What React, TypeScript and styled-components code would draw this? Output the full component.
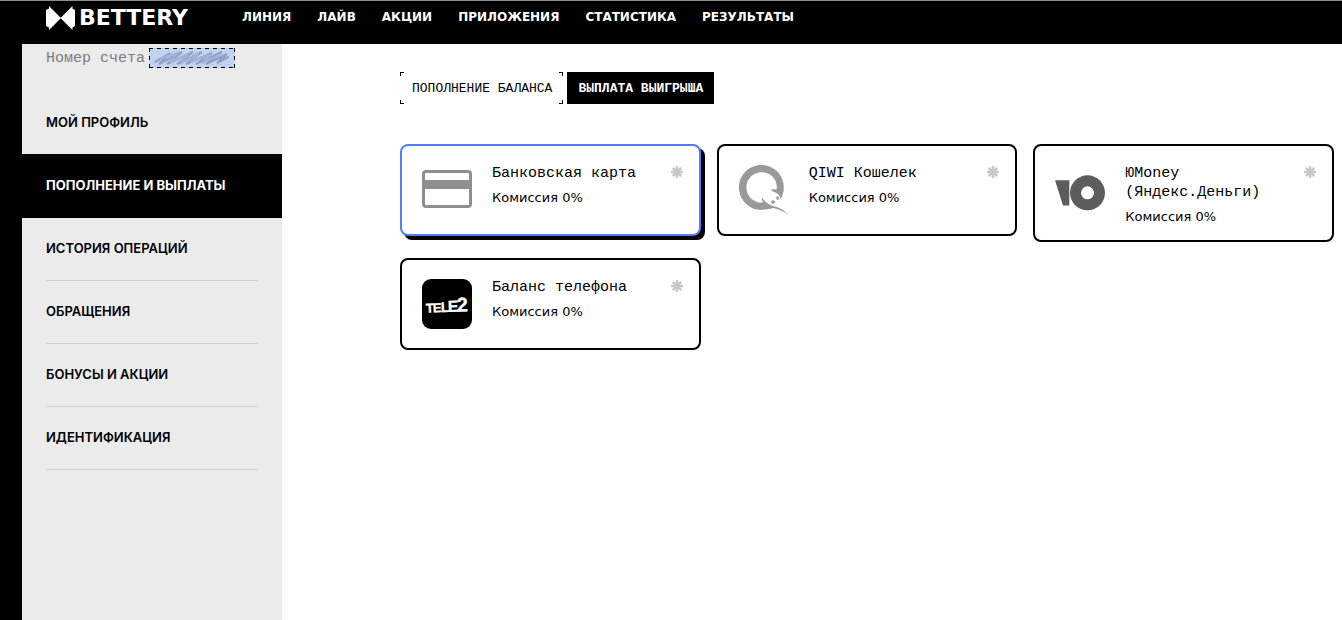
import React, { useState } from 'react';
import styled, { createGlobalStyle, css } from 'styled-components';

const mono = `'Liberation Mono', monospace`;
const sans = `Inter, 'Open Sans', sans-serif`;
const wide = `'DejaVu Sans', Verdana, sans-serif`;

const GlobalStyle = createGlobalStyle`
  *, *::before, *::after { box-sizing: border-box; }
  body {
    margin: 0;
    background: #fff;
    color: #000;
    font-family: ${sans};
  }
  button { font: inherit; color: inherit; cursor: pointer; }
  a { color: inherit; text-decoration: none; }
`;

const Page = styled.div`
  min-height: 100vh;
  display: flex;
  flex-direction: column;
`;

const Header = styled.header`
  display: flex;
  align-items: flex-start;
  gap: 54px;
  height: 44px;
  padding: 4px 24px 0 46px;
  border-top: 1px solid #8c8c8c;
  background: #000;
  color: #fff;
`;

const Logo = styled.a`
  display: flex;
  align-items: center;
  gap: 4px;
  height: 26px;
  font: bold 22px/26px ${wide};
`;

const Nav = styled.nav`
  display: flex;
  gap: 26px;
`;

const NavLink = styled.a`
  font: bold 12px/24px ${wide};
  white-space: nowrap;
`;

const Body = styled.div`
  flex: 1;
  display: flex;
  border-left: 22px solid #000;
`;

const Sidebar = styled.aside`
  flex: 0 0 260px;
  background: #ebebeb;
`;

const Account = styled.div`
  display: flex;
  align-items: flex-start;
  gap: 4px;
  padding: 4px 24px 22px;
  font: 15px/22px ${mono};
  color: #7d7d7d;
`;

const dashX = 'linear-gradient(90deg, #000 4px, transparent 4px)';
const dashY = 'linear-gradient(#000 4px, transparent 4px)';

const HiddenNumber = styled.span`
  display: flex;
  width: 86px;
  height: 20px;
  padding: 1px;
  background: ${dashX} left top / 8px 1px repeat-x, ${dashX} left bottom / 8px 1px repeat-x,
    ${dashY} left top / 1px 8px repeat-y, ${dashY} right top / 1px 8px repeat-y, #c1d3f3;
`;

const Menu = styled.ul`
  list-style: none;
  margin: 0;
  padding: 0;
`;

const MenuItem = styled.li<{ $active?: boolean }>`
  padding: 0 24px;
  ${({ $active }) =>
    $active &&
    css`
      margin-top: -1px;
      padding-top: 1px;
      background: #000;
      color: #fff;
    `}
`;

const MenuLink = styled.a<{ $active?: boolean }>`
  display: block;
  padding-bottom: 2px;
  border-bottom: 1px solid ${({ $active }) => ($active ? '#000' : '#d0d0d0')};
  font-size: 13px;
  font-weight: ${({ $active }) => ($active ? 700 : 600)};
  line-height: 60px;
  white-space: nowrap;
`;

const Main = styled.main`
  flex: 1;
  min-width: 0;
  padding: 28px 8px 28px 118px;
`;

const Tabs = styled.div`
  display: flex;
  gap: 4px;
  margin-bottom: 40px;
`;

const corner = (x: string, y: string) =>
  `linear-gradient(#000, #000) ${x} ${y} / 4px 1px no-repeat, linear-gradient(#000, #000) ${x} ${y} / 1px 4px no-repeat`;

const Tab = styled.button<{ $active?: boolean }>`
  height: 32px;
  padding: 2px 11px 0 12px;
  border: 0;
  font: 13px/30px ${mono};
  ${({ $active }) =>
    $active
      ? css`
          padding-left: 11px;
          background: #000;
          color: #fff;
          font-weight: 700;
        `
      : css`
          background: ${corner('left', 'top')}, ${corner('right', 'top')},
            ${corner('left', 'bottom')}, ${corner('right', 'bottom')};
        `}
`;

const Cards = styled.div`
  display: grid;
  grid-template-columns: repeat(3, minmax(0, 1fr));
  align-items: start;
  gap: 16px;
`;

const Card = styled.button<{ $selected?: boolean }>`
  display: flex;
  align-items: flex-start;
  gap: 20px;
  min-height: 92px;
  padding: 0 16px 0 20px;
  border: 2px solid ${({ $selected }) => ($selected ? '#527bff' : '#000')};
  border-radius: 8px;
  background: #fff;
  box-shadow: ${({ $selected }) => ($selected ? '4px 4px 0 #000' : 'none')};
  text-align: left;
`;

const CardIcon = styled.svg`
  flex: none;
  align-self: center;
  width: 50px;
  height: 50px;
  overflow: visible;
`;

const CardText = styled.span`
  flex: 1;
  display: flex;
  flex-direction: column;
  gap: 5px;
  padding: 18px 0 14px;
`;

const CardTitle = styled.span`
  font: 15px/19px ${mono};
`;

const Fee = styled.span`
  font: 13px/19px ${wide};
`;

const StarIcon = styled.svg`
  flex: none;
  width: 12px;
  height: 12px;
  margin-top: 20px;
`;

const Star = () => (
  <StarIcon viewBox="0 0 12 12" stroke="#c8c8c8" strokeWidth="2.5" aria-hidden="true">
    <path d="M6 0v12M0 6h12M1.8 1.8l8.4 8.4M10.2 1.8l-8.4 8.4" />
  </StarIcon>
);

const BankCardIcon = () => (
  <CardIcon viewBox="0 0 50 50" aria-hidden="true">
    <rect x="1.5" y="6.5" width="47" height="35" rx="2.5" fill="none" stroke="#8f8f8f" strokeWidth="3" />
    <path d="M2 15h46v9H2z" fill="#8f8f8f" />
  </CardIcon>
);

const QiwiIcon = () => (
  <CardIcon viewBox="0 0 50 50" fill="#999" aria-hidden="true">
    <path
      fillRule="evenodd"
      d="M22.4 0C34.8 0 44.8 10 44.8 22.4c0 4.200-1.200 8.200-3.200 11.600-.8-3.600-3.200-6.400-7.200-7.200-1-.6-1.800-1.200-2.600-2.200 1.900-.4 3.700-.4 5.600.2.300-1.200.4-2 .4-3.200C37.800 13.600 31 7.200 22.600 7.200 14 7.200 7.400 14 7.400 22.400S14 37.600 22.600 37.600c.6 0 1.200-.1 1.800-.2-1.400-1.400-1.800-3-1.400-5 3 4.600 7.200 7.800 12.800 9.200 5.200 1.200 9.800 3.800 12.900 8.200-3.900-3.400-9-5.600-14.700-6.700-3.600 1.200-7.600 1.700-11.600 1.700C10 44.800 0 34.800 0 22.400S10 0 22.400 0z"
    />
    <ellipse cx="38.6" cy="33" rx="1.300" ry="1.900" transform="rotate(-15 38.600 33)" />
    <ellipse cx="34" cy="37" rx="2" ry="1.700" />
  </CardIcon>
);

const YooMoneyIcon = () => (
  <CardIcon viewBox="0 0 50 50" fill="#5c5c5c" aria-hidden="true">
    <path d="M0 12.200h14.300V37.500H8z" />
    <path
      fillRule="evenodd"
      d="M32.500 7.300a17.500 17.500 0 1 1 0 35 17.500 17.500 0 0 1 0-35zm0 11a6.500 6.500 0 1 0 0 13 6.500 6.500 0 0 0 0-13z"
    />
  </CardIcon>
);

const Tele2Icon = () => (
  <CardIcon viewBox="0 0 50 50" aria-hidden="true">
    <rect width="50" height="50" rx="9" />
    <g transform="rotate(-2 25 32)" fill="#fff" stroke="#fff" strokeWidth="0.300">
      <text y="33" fontFamily="'Liberation Sans', sans-serif" fontWeight="700">
        <tspan x="4" fontSize="13">T</tspan>
        <tspan x="11" fontSize="13">E</tspan>
        <tspan x="19" fontSize="14">L</tspan>
        <tspan x="26" fontSize="16">E</tspan>
        <tspan x="35" fontSize="20">2</tspan>
      </text>
    </g>
  </CardIcon>
);

const Bowtie = () => (
  <svg width="29" height="24" viewBox="0 0 29 24" fill="#fff" aria-hidden="true">
    <path d="M0 4 3 2.500V0l11.500 11.500h0.500L26.500 0v2.500L29 4v16l-2.500 1.500V24L15 12.500h-0.500L3 24v-2.500L0 20z" />
  </svg>
);

const Scribble = () => (
  <svg width="84" height="18" viewBox="0 0 84 18" fill="none" strokeLinecap="round" aria-hidden="true">
    <path
      d="M5 13 20 4 9 15 32 3 17 15 43 3 27 15 52 3 36 15 62 4 46 15 72 3 56 15 77 5 67 14 78 8"
      stroke="#8294bb"
      strokeWidth="2"
      opacity="0.800"
    />
    <path d="M12 9 27 4 20 13 38 5 31 14 49 5 41 13 60 6 52 14 70 6" stroke="#a3b4d8" strokeWidth="2" />
  </svg>
);

const navLinks = ['ЛИНИЯ', 'ЛАЙВ', 'АКЦИИ', 'ПРИЛОЖЕНИЯ', 'СТАТИСТИКА', 'РЕЗУЛЬТАТЫ'];

const menu = [
  'МОЙ ПРОФИЛЬ',
  'ПОПОЛНЕНИЕ И ВЫПЛАТЫ',
  'ИСТОРИЯ ОПЕРАЦИЙ',
  'ОБРАЩЕНИЯ',
  'БОНУСЫ И АКЦИИ',
  'ИДЕНТИФИКАЦИЯ',
];
const activeMenu = 'ПОПОЛНЕНИЕ И ВЫПЛАТЫ';

const tabs = ['ПОПОЛНЕНИЕ БАЛАНСА', 'ВЫПЛАТА ВЫИГРЫША'];

const methods = [
  { title: 'Банковская карта', Icon: BankCardIcon },
  { title: 'QIWI Кошелек', Icon: QiwiIcon },
  { title: 'ЮMoney (Яндекс.Деньги)', Icon: YooMoneyIcon },
  { title: 'Баланс телефона', Icon: Tele2Icon },
];

export default function App() {
  const [tab, setTab] = useState(tabs[1]);
  const [method, setMethod] = useState(methods[0].title);

  return (
    <Page>
      <GlobalStyle />
      <Header>
        <Logo href="#">
          <Bowtie />
          BETTERY
        </Logo>
        <Nav>
          {navLinks.map((label) => (
            <NavLink key={label} href="#">
              {label}
            </NavLink>
          ))}
        </Nav>
      </Header>
      <Body>
        <Sidebar>
          <Account>
            Номер счета
            <HiddenNumber>
              <Scribble />
            </HiddenNumber>
          </Account>
          <Menu>
            {menu.map((label) => (
              <MenuItem key={label} $active={label === activeMenu}>
                <MenuLink href="#" $active={label === activeMenu}>
                  {label}
                </MenuLink>
              </MenuItem>
            ))}
          </Menu>
        </Sidebar>
        <Main>
          <Tabs>
            {tabs.map((label) => (
              <Tab key={label} type="button" $active={label === tab} onClick={() => setTab(label)}>
                {label}
              </Tab>
            ))}
          </Tabs>
          <Cards>
            {methods.map(({ title, Icon }) => (
              <Card key={title} type="button" $selected={title === method} onClick={() => setMethod(title)}>
                <Icon />
                <CardText>
                  <CardTitle>{title}</CardTitle>
                  <Fee>Комиссия 0%</Fee>
                </CardText>
                <Star />
              </Card>
            ))}
          </Cards>
        </Main>
      </Body>
    </Page>
  );
}
